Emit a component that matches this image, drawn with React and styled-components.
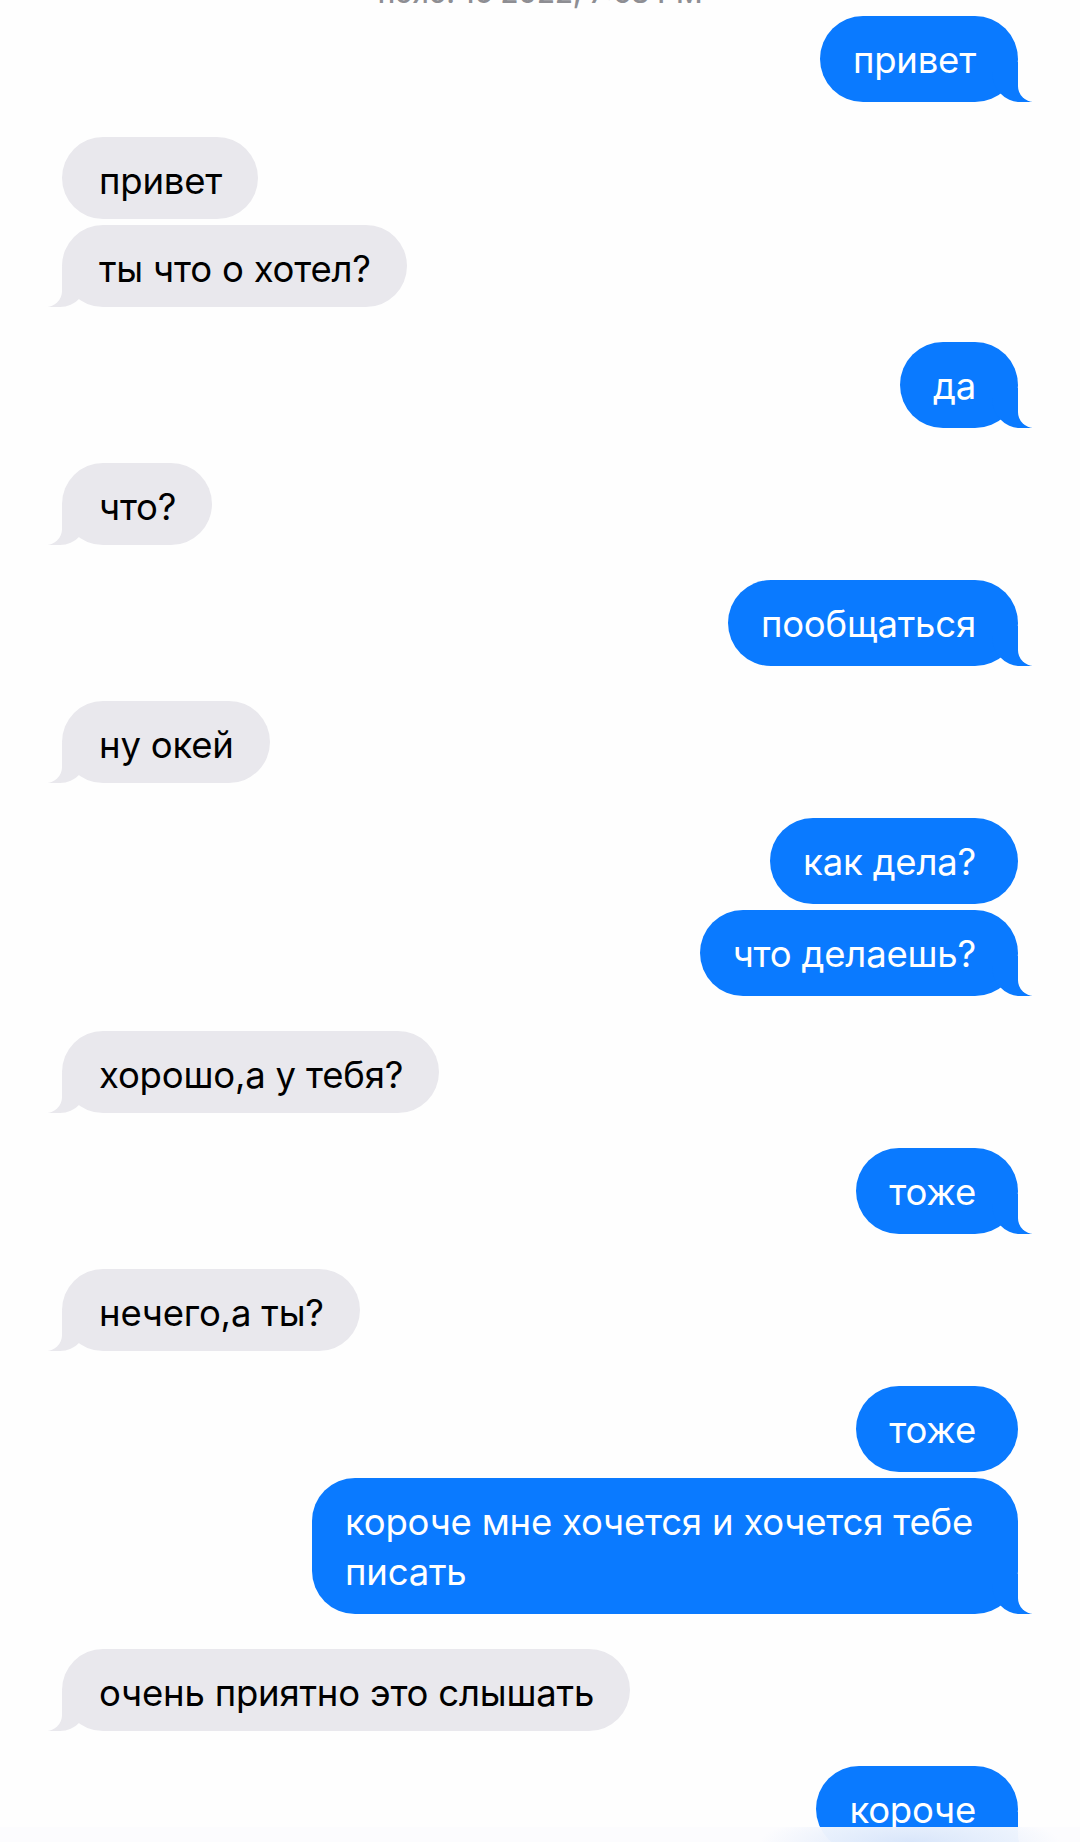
import React from 'react';
import styled, { createGlobalStyle, css } from 'styled-components';

const GlobalStyle = createGlobalStyle`
  body {
    margin: 0;
    background: #fefefe;
    font-family: 'Inter', 'Noto Sans', sans-serif;
  }
`;

const SENT = '#0a7aff';
const RECEIVED = '#e9e8ed';
const PAGE = '#fefefe';

const groups = [
  { from: 'me', texts: ['привет'] },
  { from: 'them', texts: ['привет', 'ты что о хотел?'] },
  { from: 'me', texts: ['да'] },
  { from: 'them', texts: ['что?'] },
  { from: 'me', texts: ['пообщаться'] },
  { from: 'them', texts: ['ну окей'] },
  { from: 'me', texts: ['как дела?', 'что делаешь?'] },
  { from: 'them', texts: ['хорошо,а у тебя?'] },
  { from: 'me', texts: ['тоже'] },
  { from: 'them', texts: ['нечего,а ты?'] },
  { from: 'me', texts: ['тоже', 'короче мне хочется и хочется тебе писать'] },
  { from: 'them', texts: ['очень приятно это слышать'] },
  { from: 'me', texts: ['короче'] },
];

export default function App() {
  return (
    <Screen>
      <GlobalStyle />
      <Stamp>нояб. 16 2022, 7:53 PM</Stamp>

      <Thread>
        {groups.map((group, i) => (
          <Group key={i} $mine={group.from === 'me'}>
            {group.texts.map((text, j) => (
              <Bubble
                key={j}
                $mine={group.from === 'me'}
                $tail={j === group.texts.length - 1}
              >
                {text}
              </Bubble>
            ))}
          </Group>
        ))}
      </Thread>

      <BottomHaze />
    </Screen>
  );
}

const Screen = styled.div`
  position: relative;
  width: 1080px;
  height: 1842px;
  overflow: hidden;
  background: ${PAGE};
`;

const Stamp = styled.div`
  margin-top: -22px;
  height: 30px;
  line-height: 30px;
  text-align: center;
  color: #8e8e93;
  font-size: 29px;
  font-weight: 500;
`;

const Thread = styled.div`
  display: flex;
  flex-direction: column;
  gap: 35px;
  padding: 8px 62px 0;
`;

const Group = styled.div`
  display: flex;
  flex-direction: column;
  align-items: ${({ $mine }) => ($mine ? 'flex-end' : 'flex-start')};
  gap: 6px;
`;

const sentTail = css`
  &::before {
    content: '';
    position: absolute;
    z-index: -1;
    bottom: 0;
    right: -14px;
    width: 40px;
    height: 40px;
    background: ${SENT};
    border-bottom-left-radius: 28px 30px;
  }
  &::after {
    content: '';
    position: absolute;
    z-index: -1;
    bottom: 0;
    right: -30px;
    width: 30px;
    height: 40px;
    background: ${PAGE};
    border-bottom-left-radius: 16px;
  }
`;

const receivedTail = css`
  &::before {
    content: '';
    position: absolute;
    z-index: -1;
    bottom: 0;
    left: -14px;
    width: 40px;
    height: 40px;
    background: ${RECEIVED};
    border-bottom-right-radius: 28px 30px;
  }
  &::after {
    content: '';
    position: absolute;
    z-index: -1;
    bottom: 0;
    left: -30px;
    width: 30px;
    height: 40px;
    background: ${PAGE};
    border-bottom-right-radius: 16px;
  }
`;

const Bubble = styled.div`
  position: relative;
  z-index: 0;
  box-sizing: border-box;
  max-width: 706px;
  border-radius: 43px;
  font-size: 36.5px;
  line-height: 50px;
  letter-spacing: -0.2px;
  background: ${({ $mine }) => ($mine ? SENT : RECEIVED)};
  color: ${({ $mine }) => ($mine ? '#fff' : '#000')};
  padding: ${({ $mine }) => ($mine ? '19px 42px 17px 33px' : '19px 36px 13px 37px')};

  ${({ $mine, $tail }) => $tail && ($mine ? sentTail : receivedTail)}
`;

const BottomHaze = styled.div`
  position: absolute;
  left: 0;
  right: 0;
  bottom: 0;
  height: 15px;
  background:
    radial-gradient(ellipse 150px 30px at 910px 100%, rgba(214, 228, 250, 0.9), rgba(214, 228, 250, 0) 100%),
    rgba(252, 252, 254, 0.96);
`;
